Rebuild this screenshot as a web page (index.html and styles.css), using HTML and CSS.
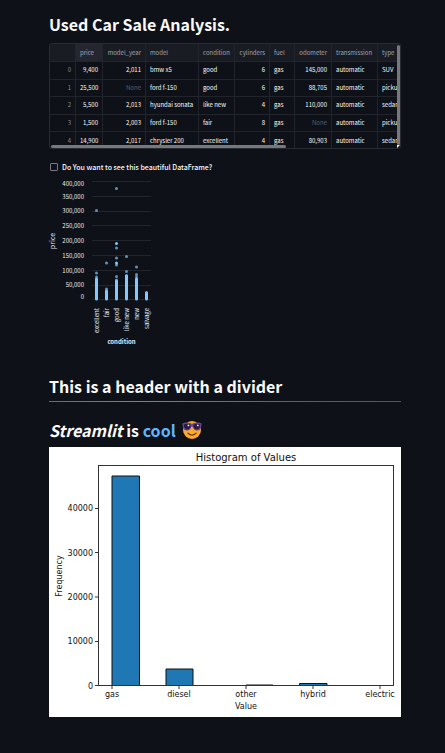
FILE: index.html
```html
<!DOCTYPE html>
<html lang="en">
<head>
<meta charset="utf-8">
<meta name="viewport" content="width=device-width, initial-scale=1">
<title>Used Car Sale Analysis</title>
<link rel="stylesheet" href="styles.css">
</head>
<body>
<main class="page">
  <h1 class="heading">Used Car Sale Analysis.</h1>

  <div class="frame">
    <table class="data">
      <colgroup>
        <col class="w-index"><col class="w-price"><col class="w-year"><col class="w-model"><col class="w-cond"><col class="w-cyl"><col class="w-fuel"><col class="w-odo"><col class="w-trans"><col class="w-type">
      </colgroup>
      <thead>
        <tr><th></th><th class="sorted">price</th><th class="num">model_year</th><th>model</th><th>condition</th><th class="num">cylinders</th><th>fuel</th><th class="num">odometer</th><th>transmission</th><th>type</th></tr>
      </thead>
      <tbody>
        <tr><td class="num dim">0</td><td class="num">9,400</td><td class="num">2,011</td><td>bmw x5</td><td>good</td><td class="num">6</td><td>gas</td><td class="num">145,000</td><td>automatic</td><td>SUV</td></tr>
        <tr><td class="num dim">1</td><td class="num">25,500</td><td class="num none">None</td><td>ford f-150</td><td>good</td><td class="num">6</td><td>gas</td><td class="num">88,705</td><td>automatic</td><td>pickup</td></tr>
        <tr><td class="num dim">2</td><td class="num">5,500</td><td class="num">2,013</td><td>hyundai sonata</td><td>like new</td><td class="num">4</td><td>gas</td><td class="num">110,000</td><td>automatic</td><td>sedan</td></tr>
        <tr><td class="num dim">3</td><td class="num">1,500</td><td class="num">2,003</td><td>ford f-150</td><td>fair</td><td class="num">8</td><td>gas</td><td class="num none">None</td><td>automatic</td><td>pickup</td></tr>
        <tr><td class="num dim">4</td><td class="num">14,900</td><td class="num">2,017</td><td>chrysler 200</td><td>excellent</td><td class="num">4</td><td>gas</td><td class="num">80,903</td><td>automatic</td><td>sedan</td></tr>
      </tbody>
    </table>
    <span class="bar-x"></span>
    <span class="bar-y"></span>
    <span class="corner"></span>
  </div>

  <label class="check"><input type="checkbox" class="box"> Do You want to see this beautiful DataFrame?</label>

  <svg class="scatter" viewBox="48 176 112 176" role="img" aria-label="Price by condition">
    <g class="grid">
      <path d="M92 181.5h59M92 196.5h59M92 211.5h59M92 225.5h59M92 240.5h59M92 255.5h59M92 270.5h59M92 285.5h59M92 299.5h59"/>
    </g>
    <g class="ticks-y">
      <text x="84" y="186">400,000</text><text x="84" y="199">350,000</text><text x="84" y="213">300,000</text><text x="84" y="228">250,000</text><text x="84" y="243">200,000</text><text x="84" y="258">150,000</text><text x="84" y="273">100,000</text><text x="84" y="287">50,000</text><text x="84" y="299">0</text>
    </g>
    <g class="columns">
      <path d="M96.500 279V299M106.500 291V299M116.500 281V299M126.500 276V299M136.500 279V299M146.500 293V299"/>
    </g>
    <g class="dots">
      <circle cx="96.500" cy="210.500" r="1.500"/><circle cx="96.500" cy="273" r="1.500"/><circle cx="96.500" cy="277" r="1.500"/>
      <circle cx="106.500" cy="263" r="1.500"/><circle cx="106.500" cy="289" r="1.500"/>
      <circle cx="116.500" cy="188.500" r="1.500"/><circle class="solid" cx="116.500" cy="243.500" r="1.500"/><circle cx="116.500" cy="248" r="1.500"/><circle cx="116.500" cy="258" r="1.500"/><circle class="solid" cx="116.500" cy="263" r="1.500"/><circle cx="116.500" cy="265" r="1.500"/><circle cx="116.500" cy="276.500" r="1.500"/><circle cx="116.500" cy="280" r="1.500"/>
      <circle cx="126.500" cy="256.500" r="1.500"/><circle cx="126.500" cy="271.500" r="1.500"/><circle cx="126.500" cy="275.500" r="1.500"/>
      <circle cx="136.500" cy="267" r="1.500"/><circle cx="136.500" cy="274.500" r="1.500"/><circle cx="136.500" cy="277" r="1.500"/>
      <circle cx="146.500" cy="292.500" r="1.500"/>
    </g>
    <g class="ticks-x">
      <text transform="translate(99 308) rotate(-90)">excellent</text><text transform="translate(109 308) rotate(-90)">fair</text><text transform="translate(119 308) rotate(-90)">good</text><text transform="translate(129 308) rotate(-90)">like new</text><text transform="translate(139 308) rotate(-90)">new</text><text transform="translate(149 308) rotate(-90)">salvage</text>
    </g>
    <g class="titles">
      <text class="strong" x="121.500" y="344">condition</text>
      <text class="side" transform="translate(55 241) rotate(-90)">price</text>
    </g>
  </svg>

  <h2 class="heading">This is a header with a divider</h2>
  <hr class="rainbow">

  <h2 class="heading cool-line"><span><em>Streamlit</em> is <span class="blue">cool</span></span>
    <svg class="emoji" viewBox="0 0 20 20" role="img" aria-label="Smiling face with sunglasses">
      <circle cx="10" cy="10" r="9" fill="#fcab2e"/>
      <path d="M.3 3.500Q5 1.300 10 3.800Q15 1.300 19.700 3.500L19 7.500Q18.300 10.800 14.800 10.500Q11.500 10.300 10.600 6.800H9.400Q8.500 10.300 5.200 10.500Q1.700 10.800 1 7.500Z" fill="#6b459b"/>
      <path d="M1.700 4.400Q5.500 3 8.700 4.800Q8.600 9.500 5.200 9.500Q2.300 9.500 1.700 4.400ZM11.300 4.800Q14.500 3 18.300 4.400Q17.700 9.500 14.800 9.500Q11.400 9.500 11.300 4.800Z" fill="#291b43"/>
      <path d="M6 4.600l1.500.5-.8 1.500-1.300-.8ZM15.300 4.500l1.600.4-.8 1.700-1.300-.8Z" fill="#fff"/>
      <path d="M6 13.200Q10 17 14 13.200" fill="none" stroke="#693b16" stroke-width="1.300" stroke-linecap="round"/>
    </svg>
  </h2>

  <svg class="histogram" viewBox="0 0 352 270" role="img" aria-label="Histogram of Values">
    <rect width="352" height="270" fill="#fff"/>
    <g fill="#1f77b4" stroke="#111">
      <path d="M63 238.500V29H90.500V238.500Z"/>
      <path d="M117 238.500V222H144V238.500Z"/>
      <path d="M197 237.500H224" stroke="#888"/>
      <path d="M250.500 238.500V236.500H278V238.500Z"/>
    </g>
    <rect class="axis" x="49.500" y="18.500" width="295" height="220"/>
    <path class="axis" d="M46 238.500h3M46 194.500h3M46 150h3M46 105.500h3M46 61.500h3M63 239v3M130 239v3M197 239v3M264 239v3M331 239v3"/>
    <g class="plot-text end">
      <text x="44" y="242">0</text><text x="44" y="197">10000</text><text x="44" y="153">20000</text><text x="44" y="109">30000</text><text x="44" y="64">40000</text>
    </g>
    <g class="plot-text">
      <text x="63" y="250">gas</text><text x="130" y="250">diesel</text><text x="197" y="250">other</text><text x="264" y="250">hybrid</text><text x="331" y="250">electric</text>
      <text x="197" y="262">Value</text>
      <text transform="translate(13 129) rotate(-90)">Frequency</text>
      <text class="plot-title" x="197" y="14">Histogram of Values</text>
    </g>
  </svg>
</main>
</body>
</html>
```

FILE: styles.css
```css
* { box-sizing: border-box; }

body {
  margin: 0;
  background: #0e1117;
  color: #fafafa;
  font-family: "Noto Sans CJK SC", "Noto Sans", sans-serif;
}

.page {
  display: flex;
  flex-direction: column;
  padding: 12px 44px 36px 49px;
}

.heading {
  margin: 0;
  font-size: 16px;
  line-height: 24px;
  font-weight: 700;
}

.frame {
  position: relative;
  margin-top: 7px;
  height: 106px;
  border: 1px solid #292b33;
  border-radius: 3px;
  overflow: hidden;
}

.data {
  width: 374px;
  height: 106px;
  table-layout: fixed;
  border-collapse: separate;
  border-spacing: 0;
  font-size: 6px;
  line-height: 10px;
}

.w-index { width: 26px; }
.w-price { width: 27px; }
.w-year { width: 43px; }
.w-model { width: 53px; }
.w-cond { width: 36px; }
.w-cyl { width: 35px; }
.w-fuel { width: 25px; }
.w-odo { width: 37px; }
.w-trans { width: 46px; }
.w-type { width: 46px; }

.data th,
.data td {
  padding: 0 4px;
  border-right: 1px solid #22242c;
  border-bottom: 1px solid #22242c;
  text-align: left;
  font-weight: 400;
  white-space: nowrap;
}

.data th {
  height: 18px;
  background: #1a1c24;
  color: #a3a4aa;
}

.data th.sorted { background: #262630; }
.data .num { text-align: right; }
.data .dim { color: #8b8c92; }
.data .none { color: #5c5e68; }

.bar-x,
.bar-y,
.corner {
  position: absolute;
  background: #77787b;
}

.bar-x { left: 1px; bottom: 0; width: 67%; height: 3px; border-radius: 2px; }
.bar-y { right: 0; top: 1px; bottom: 3px; width: 3px; border-radius: 2px; }
.corner { right: 0; bottom: 0; width: 3px; height: 3px; background: #fff; clip-path: polygon(0 0, 100% 0, 0 100%); }

.check {
  display: flex;
  align-items: center;
  gap: 4px;
  margin-top: 12px;
  padding-left: 1px;
  font-size: 7px;
  line-height: 12px;
  font-weight: 500;
}

.box {
  appearance: none;
  width: 8px;
  height: 8px;
  margin: 0;
  border: 1px solid #777980;
  border-radius: 1px;
}

.scatter {
  width: 112px;
  height: 176px;
  margin: 3px 0 0 -1px;
  font-size: 6px;
  fill: #e6eaf1;
}

.grid { stroke: #22252d; }
.ticks-y,
.ticks-x { text-anchor: end; }
.titles { text-anchor: middle; }
.strong { font-weight: 700; }
.side { font-size: 7px; }
.columns { stroke: #83c9ff; stroke-width: 3px; stroke-linecap: round; }
.dots { fill: #83c9ff; fill-opacity: 0.7; }
.solid { fill-opacity: 1; }

.scatter + .heading { margin-top: 22px; }

.rainbow {
  width: 100%;
  height: 1px;
  margin: 3px 0 16px;
  border: 0;
  background: linear-gradient(to right, #ff4b4b, #ff8700, #21c354, #1c83e1, #803df5);
  opacity: 0.8;
}

.cool-line { display: flex; align-items: center; gap: 6px; }
.blue { color: #60b4ff; }
.emoji { width: 20px; height: 20px; }

.histogram { width: 100%; height: auto; margin-top: 5px; }
.axis { fill: none; stroke: #333; }
.plot-text { font-family: "DejaVu Sans", sans-serif; font-size: 8px; text-anchor: middle; fill: #111; }
.end { text-anchor: end; }
.plot-text .plot-title { font-size: 10px; }
```
